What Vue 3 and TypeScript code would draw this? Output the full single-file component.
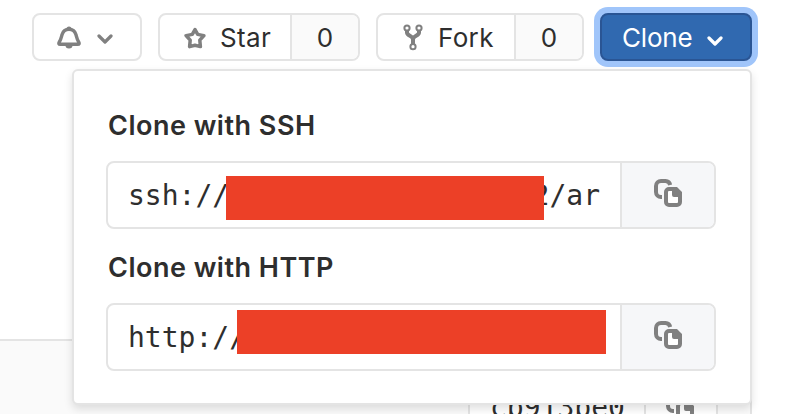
<script setup lang="ts">
interface CloneOption {
  id: string
  title: string
  prefix: string
  suffix: string
}

const counters = [
  { id: 'star', label: 'Star', count: 0 },
  { id: 'fork', label: 'Fork', count: 0 },
]

const options: CloneOption[] = [
  { id: 'ssh', title: 'Clone with SSH', prefix: 'ssh://', suffix: '2/ar' },
  { id: 'http', title: 'Clone with HTTP', prefix: 'http://', suffix: '' },
]
</script>

<template>
  <main class="page">
    <header class="toolbar">
      <button class="btn notify" aria-label="Notifications">
        <svg class="bell" viewBox="0 0 24 24">
          <path d="M3.200 18.300c-1.500 0-1.500-.9-1.100-1.800C4 13.500 4.300 11.500 5 8.800C6 5.200 8.500 3.300 12 3.300s6 1.900 7 5.500c.7 2.700 1 4.700 2.900 7.700c.4.9.4 1.800-1.100 1.800z" fill="none" stroke="currentColor" stroke-width="3.4" stroke-linejoin="round" />
          <path d="M9.500 3a2.500 2.500 0 0 1 5 0zM8.500 19.500h7a3.500 3 0 0 1-7 0z" fill="currentColor" />
        </svg>
        <svg class="chevron" viewBox="0 0 16 10"><path d="m2 2 6 6 6-6" /></svg>
      </button>
      <div v-for="item in counters" :key="item.id" class="group" :class="item.id">
        <button class="action">
          <svg v-if="item.id === 'star'" class="star-icon" viewBox="0 0 22 22">
            <path d="m11 2.500 2.700 4.900 6.200 1.200-4.100 4.600.6 6.400-5.400-1.300-5.400 1.300.6-6.400-4.100-4.600 6.200-1.200z" />
          </svg>
          <svg v-else class="fork-icon" viewBox="0 0 20 27">
            <path class="branch" d="M4 6v2.500c0 3.500 6 3 6 7V20M16 6v2.500c0 3.500-6 3-6 7" />
            <circle cx="4" cy="4" r="2.600" /><circle cx="16" cy="4" r="2.600" /><circle cx="10" cy="22.700" r="2.600" />
          </svg>
          <span>{{ item.label }}</span>
        </button>
        <span class="count">{{ item.count }}</span>
      </div>
      <button class="btn clone">
        <span>Clone</span>
        <svg class="chevron" viewBox="0 0 16 10"><path d="m2 2 6 6 6-6" /></svg>
      </button>
    </header>

    <section class="commit">
      <div class="commit-row">
        <span class="sha">cb913be0</span>
        <span class="commit-copy">
          <svg class="copy" viewBox="0 0 28 28">
            <path class="back" d="M8 18H7A5 5 0 0 1 2 13V7a5 5 0 0 1 5-5h4.500a5 5 0 0 1 4.700 4" />
            <path class="front" fill-rule="evenodd" d="M15 8h8l5 5v10a5 5 0 0 1-5 5h-8a5 5 0 0 1-5-5V13a5 5 0 0 1 5-5zm0 4q-1 0-1 1v10q0 1 1 1h8q1 0 1-1v-5h-4q-2 0-2-2v-4z" />
          </svg>
        </span>
      </div>
    </section>

    <div class="menu">
      <div v-for="option in options" :key="option.id" class="option" :class="option.id">
        <h2>{{ option.title }}</h2>
        <div class="field">
          <div class="url">
            <span>{{ option.prefix }}</span><span v-if="option.suffix" class="suffix">{{ option.suffix }}</span>
            <i class="redaction"></i>
          </div>
          <button class="copy-button" aria-label="Copy URL">
            <svg class="copy" viewBox="0 0 28 28">
              <rect class="paper" x="12" y="10" width="14" height="16" />
              <path class="back" d="M8 18H7A5 5 0 0 1 2 13V7a5 5 0 0 1 5-5h4.500a5 5 0 0 1 4.700 4" />
              <path class="front" fill-rule="evenodd" d="M15 8h8l5 5v10a5 5 0 0 1-5 5h-8a5 5 0 0 1-5-5V13a5 5 0 0 1 5-5zm0 4q-1 0-1 1v10q0 1 1 1h8q1 0 1-1v-5h-4q-2 0-2-2v-4z" />
            </svg>
          </button>
        </div>
      </div>
    </div>
  </main>
</template>

<style>
body {
  margin: 0;
  overflow: hidden;
}
</style>

<style scoped>
.page,
.page * {
  box-sizing: border-box;
}
.page {
  position: relative;
  width: 786px;
  height: 414px;
  overflow: hidden;
  background: #fff;
  color: #2e2e2e;
  font-family: Inter, "Liberation Sans", sans-serif;
  font-size: 26px;
}
button {
  margin: 0;
  padding: 0;
  border: 0;
  background: transparent;
  color: inherit;
  font: inherit;
}
svg {
  display: block;
  flex: none;
}
.toolbar {
  display: flex;
  gap: 16px;
  height: 61px;
  padding: 13px 0 0 32px;
}
.btn,
.group {
  display: flex;
  align-items: center;
  height: 48px;
  border: 2px solid #e4e4e4;
  border-radius: 8px;
  background: #fff;
}
.notify {
  width: 110px;
  gap: 16px;
  padding-left: 23px;
  color: #808080;
}
.bell {
  width: 24px;
  height: 24px;
  margin-top: 2px;
}
.chevron {
  width: 16px;
  height: 10px;
  margin-top: 3px;
}
.chevron path {
  fill: none;
  stroke: currentColor;
  stroke-width: 3.2;
  stroke-linecap: round;
  stroke-linejoin: round;
}
.group {
  overflow: hidden;
}
.star {
  width: 202px;
}
.fork {
  width: 208px;
}
.action {
  display: flex;
  align-items: center;
  flex: 1;
  height: 100%;
}
.action span {
  letter-spacing: 0.35px;
}
.star .action {
  gap: 14px;
  padding-left: 24px;
}
.fork .action {
  gap: 15px;
  padding-left: 25px;
}
.star-icon {
  width: 22px;
  height: 22px;
  margin-top: 1px;
}
.star-icon path {
  fill: none;
  stroke: #808080;
  stroke-width: 3.5;
  stroke-linejoin: round;
}
.fork-icon {
  width: 20px;
  height: 27px;
}
.fork-icon circle {
  fill: #fff;
  stroke: #808080;
  stroke-width: 2;
}
.fork-icon .branch {
  fill: none;
  stroke: #808080;
  stroke-width: 4;
}
.count {
  display: flex;
  align-items: center;
  justify-content: center;
  width: 68px;
  height: 100%;
  border-left: 2px solid #e4e4e4;
  background: #fafafa;
}
.clone {
  width: 152px;
  gap: 15px;
  padding-left: 20px;
  border-color: #2a5594;
  background: #3069b0;
  box-shadow: 0 0 0 6px #a0c5fa;
  color: #fff;
  letter-spacing: -0.2px;
}
.clone .chevron {
  margin-top: 7px;
}
.commit {
  width: 752px;
  height: 75px;
  margin-top: 278px;
  padding-top: 43px;
  border-top: 2px solid #e4e4e4;
  border-right: 2px solid #e4e4e4;
  background: #fafafa;
}
.commit-row {
  display: flex;
  width: 250px;
  height: 48px;
  margin-left: 468px;
  border: 2px solid #e4e4e4;
  background: #fff;
}
.sha {
  width: 176px;
  padding-left: 20px;
  border-right: 2px solid #e4e4e4;
  font: 28px/44px "DejaVu Sans Mono", monospace;
}
.commit-copy {
  padding: 7px 0 0 20px;
}
.menu {
  position: absolute;
  top: 69px;
  left: 72px;
  width: 680px;
  height: 336px;
  padding: 35px 34px 0 32px;
  border: 2px solid #e4e4e4;
  border-radius: 6px;
  background: #fff;
  box-shadow: 0 4px 8px rgba(0, 0, 0, 0.12);
}
.option {
  height: 142px;
}
h2 {
  height: 37px;
  margin: 0 0 18px 2px;
  font-size: 27px;
  font-weight: 600;
  letter-spacing: 0.5px;
  line-height: 39px;
}
.field {
  display: flex;
  width: 610px;
  height: 68px;
  overflow: hidden;
  border: 2px solid #e4e4e4;
  border-radius: 8px;
}
.url {
  position: relative;
  display: flex;
  justify-content: space-between;
  width: 512px;
  padding: 0 20px;
  font: 28px/66px "DejaVu Sans Mono", monospace;
  white-space: pre;
}
.redaction {
  position: absolute;
  top: 13px;
  left: 118px;
  width: 318px;
  height: 44px;
  background: #ec4027;
}
.http .redaction {
  top: 5px;
  left: 128.500px;
  width: 369.500px;
}
.copy-button {
  flex: 1;
  padding: 0 0 4px 32px;
  border-left: 2px solid #e4e4e4;
  background: #f6f7f9;
}
.copy {
  width: 28px;
  height: 28px;
}
.copy .back {
  fill: none;
  stroke: #808080;
  stroke-width: 4;
}
.copy .paper {
  fill: #fff;
}
.copy .front {
  fill: #808080;
}
</style>
